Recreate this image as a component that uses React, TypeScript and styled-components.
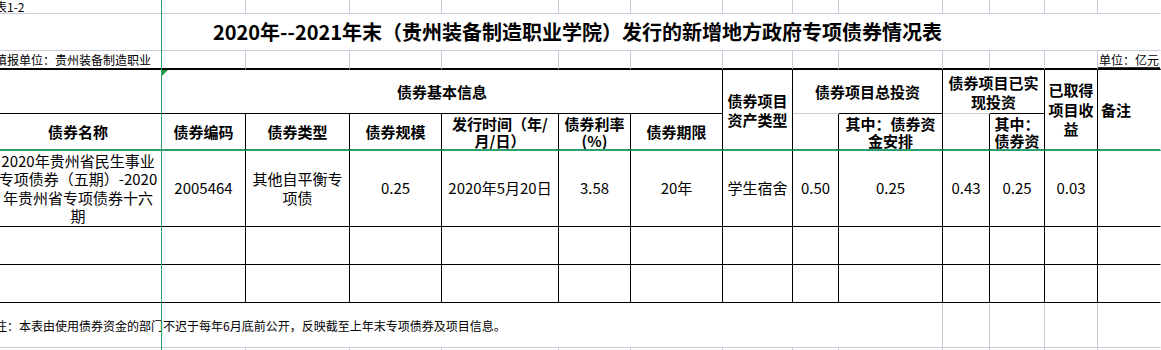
import { Fragment } from 'react';
import styled, { createGlobalStyle } from 'styled-components';

const GRID = '#c6ccd8';
const INK = '#000';
const SEL = '#2fa06d';
const NONE = 'transparent';

const COLS = Array.from({ length: 14 }, (_, i) => i + 1);

const GlobalStyle = createGlobalStyle`
  html, body {
    margin: 0;
    padding: 0;
    background: #fff;
  }
  body {
    font-family: "Noto Sans CJK SC", "Noto Sans", sans-serif;
    color: #000;
    overflow: hidden;
  }
`;

const Sheet = styled.div`
  position: relative;
  width: 1161px;
  height: 350px;
  overflow: hidden;
  background: #fff;
`;

const Grid = styled.div`
  display: grid;
  width: 1166px;
  margin-left: -5px;
  grid-template-columns: 167px 84px 104px 92px 117px 72px 92px 70px 46px 104px 47px 55px 53px 63px;
  grid-template-rows: 14px 37px 19px 44px 37px 76px 38px 38px 45px 30px;
`;

type CellProps = {
  $col: string;
  $row: string;
  $right?: string;
  $bottom?: string;
  $bottomW?: number;
  $align?: 'left' | 'center';
  $v?: 'flex-start' | 'center' | 'flex-end';
  $topInk?: boolean;
  $pad?: number;
};

const Cell = styled.div<CellProps>`
  grid-column: ${(p) => p.$col};
  grid-row: ${(p) => p.$row};
  position: relative;
  box-sizing: border-box;
  min-width: 0;
  display: flex;
  flex-direction: column;
  justify-content: ${(p) => p.$v ?? 'center'};
  align-items: ${(p) => (p.$align === 'left' ? 'flex-start' : 'center')};
  text-align: ${(p) => p.$align ?? 'center'};
  padding-left: ${(p) => p.$pad ?? 0}px;
  border-right: 1px solid ${(p) => p.$right ?? GRID};
  border-bottom: ${(p) => p.$bottomW ?? 1}px solid ${(p) => p.$bottom ?? GRID};
  box-shadow: ${(p) => (p.$topInk ? `0 -1px 0 ${INK}` : 'none')};
  overflow: hidden;
  white-space: nowrap;
`;

const CaptionCell = styled(Cell)`
  font-size: 12px;
  line-height: 13px;
`;

const TitleCell = styled(Cell)`
  font-size: 20px;
  font-weight: 700;
  line-height: 26px;
`;

const HeadCell = styled(Cell)<{ $lh?: number }>`
  font-size: 15px;
  font-weight: 700;
  line-height: ${(p) => p.$lh ?? 18}px;
`;

const DataCell = styled(Cell)`
  font-size: 15px;
  line-height: 18.3px;
`;

const NoteCell = styled(Cell)`
  font-size: 12px;
  line-height: 15px;
`;

const UnitText = styled.span`
  align-self: stretch;
  padding-left: 1px;
  line-height: 14px;
  border-bottom: 1px solid #333;
`;

const Corner = styled.span`
  position: absolute;
  top: 0;
  left: 0;
  width: 0;
  height: 0;
  border-top: 6px solid #1f9a45;
  border-right: 6px solid transparent;
`;

const SelectLine = styled.div`
  position: absolute;
  top: 0;
  bottom: 0;
  left: 161px;
  width: 1px;
  background: ${SEL};
  pointer-events: none;
`;

function Lines({ lines }: { lines: string[] }) {
  return (
    <>
      {lines.map((l, i) => (
        <Fragment key={i}>
          {i > 0 && <br />}
          {l}
        </Fragment>
      ))}
    </>
  );
}

const subHeads: { col: number; lines: string[] }[] = [
  { col: 2, lines: ['债券编码'] },
  { col: 3, lines: ['债券类型'] },
  { col: 4, lines: ['债券规模'] },
  { col: 5, lines: ['发行时间（年/', '月/日）'] },
  { col: 6, lines: ['债券利率', '(%)'] },
  { col: 7, lines: ['债券期限'] },
];

const bondRow: string[][] = [
  ['2020年贵州省民生事业', '专项债券（五期）-2020', '年贵州省专项债券十六', '期'],
  ['2005464'],
  ['其他自平衡专', '项债'],
  ['0.25'],
  ['2020年5月20日'],
  ['3.58'],
  ['20年'],
  ['学生宿舍'],
  ['0.50'],
  ['0.25'],
  ['0.43'],
  ['0.25'],
  ['0.03'],
  [],
];

export default function App() {
  const edge = (c: number) => (c === 14 ? NONE : GRID);
  const ink = (c: number) => (c === 14 ? NONE : INK);

  return (
    <>
      <GlobalStyle />
      <Sheet>
        <Grid>
          {COLS.map((c) => (
            <CaptionCell key={`r1-${c}`} $col={`${c}`} $row="1" $right={edge(c)} $align="left" $v="flex-start">
              {c === 1 && '表1-2'}
            </CaptionCell>
          ))}

          <TitleCell $col="1 / 15" $row="2" $right={NONE}>
            2020年--2021年末（贵州装备制造职业学院）发行的新增地方政府专项债券情况表
          </TitleCell>

          {COLS.map((c) =>
            c === 14 ? (
              <CaptionCell key="r3-14" $col="14" $row="3" $right={NONE} $bottom={INK} $bottomW={2} $v="flex-end" $align="left">
                <UnitText>单位：亿元</UnitText>
              </CaptionCell>
            ) : (
              <CaptionCell key={`r3-${c}`} $col={`${c}`} $row="3" $bottom={INK} $bottomW={2} $align="left">
                {c === 1 && '填报单位：贵州装备制造职业'}
              </CaptionCell>
            )
          )}

          <HeadCell $col="1" $row="4" $right={INK} $bottom={INK} />
          <HeadCell $col="1" $row="5" $right={INK} $bottom={SEL} $bottomW={2}>
            债券名称
          </HeadCell>
          <HeadCell $col="2 / 8" $row="4" $right={INK} $bottom={INK}>
            <Corner />
            债券基本信息
          </HeadCell>
          {subHeads.map((h) => (
            <HeadCell key={h.col} $col={`${h.col}`} $row="5" $right={INK} $bottom={SEL} $bottomW={2} $lh={17}>
              <Lines lines={h.lines} />
            </HeadCell>
          ))}
          <HeadCell $col="8" $row="4 / 6" $right={INK} $bottom={SEL} $bottomW={2} $lh={19}>
            <Lines lines={['债券项目', '资产类型']} />
          </HeadCell>
          <HeadCell $col="9 / 11" $row="4" $right={INK}>
            债券项目总投资
          </HeadCell>
          <HeadCell $col="9" $row="5" $right={INK} $bottom={SEL} $bottomW={2} />
          <HeadCell $col="10" $row="5" $right={INK} $bottom={SEL} $bottomW={2} $topInk $lh={17}>
            <Lines lines={['其中：债券资', '金安排']} />
          </HeadCell>
          <HeadCell $col="11 / 13" $row="4" $right={INK} $lh={19}>
            <Lines lines={['债券项目已实', '现投资']} />
          </HeadCell>
          <HeadCell $col="11" $row="5" $right={INK} $bottom={SEL} $bottomW={2} />
          <HeadCell $col="12" $row="5" $right={INK} $bottom={SEL} $bottomW={2} $topInk $lh={17}>
            <Lines lines={['其中：', '债券资']} />
          </HeadCell>
          <HeadCell $col="13" $row="4 / 6" $right={INK} $bottom={SEL} $bottomW={2} $lh={19.5}>
            <Lines lines={['已取得', '项目收', '益']} />
          </HeadCell>
          <HeadCell $col="14" $row="4 / 6" $right={NONE} $bottom={SEL} $bottomW={2} $align="left" $pad={3}>
            备注
          </HeadCell>

          {bondRow.map((lines, i) => (
            <DataCell key={`d-${i}`} $col={`${i + 1}`} $row="6" $right={ink(i + 1)} $bottom={INK}>
              <Lines lines={lines} />
            </DataCell>
          ))}
          {[7, 8].flatMap((r) =>
            COLS.map((c) => <DataCell key={`e-${r}-${c}`} $col={`${c}`} $row={`${r}`} $right={ink(c)} $bottom={INK} />)
          )}

          <NoteCell $col="1 / 11" $row="9" $align="left">
            注：本表由使用债券资金的部门不迟于每年6月底前公开，反映截至上年末专项债券及项目信息。
          </NoteCell>
          {[11, 12, 13, 14].map((c) => (
            <NoteCell key={`n-${c}`} $col={`${c}`} $row="9" $right={edge(c)} />
          ))}

          {COLS.map((c) => (
            <CaptionCell key={`r10-${c}`} $col={`${c}`} $row="10" $right={edge(c)} />
          ))}
        </Grid>
        <SelectLine />
      </Sheet>
    </>
  );
}
